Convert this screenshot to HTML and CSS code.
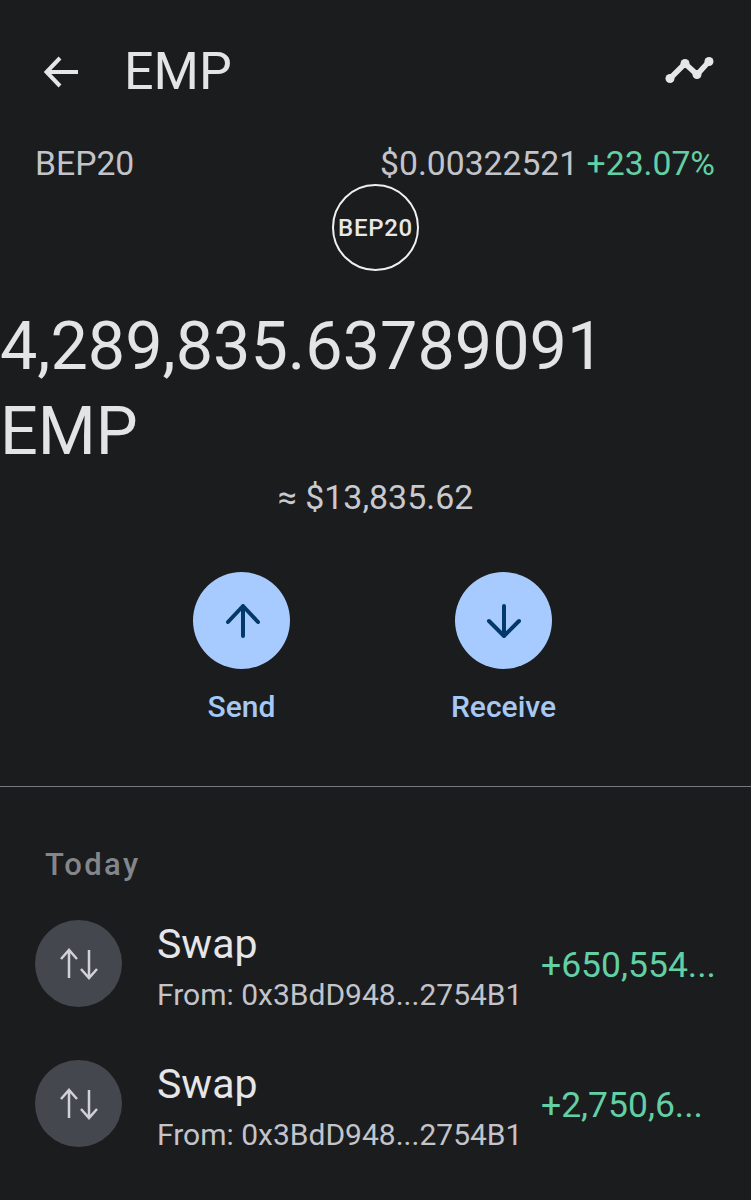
FILE: index.html
```html
<!DOCTYPE html>
<html lang="en">
<head>
  <meta charset="UTF-8">
  <title>EMP</title>
  <meta name="viewport" content="width=device-width, initial-scale=1.0">
  <link rel="stylesheet" href="styles.css">
</head>
<body>

<header class="topbar">
  <svg class="back" viewBox="0 0 36 32" width="36" height="32"><path d="M34 16H3M16 2L2.5 16L16 30"/></svg>
  <h1>EMP</h1>
  <svg class="chart" viewBox="0 0 50 30" width="50" height="30">
    <path d="M5 21.5L20 6.5L32 17.5L44 4.5"/>
    <circle cx="5" cy="21.5" r="4.5"/><circle cx="20" cy="6.5" r="4.5"/><circle cx="32" cy="17.5" r="4.5"/><circle cx="44" cy="4.5" r="4.5"/>
  </svg>
</header>

<div class="price-row">
  <span>BEP20</span>
  <span>$0.00322521 <span class="up">+23.07%</span></span>
</div>

<div class="badge">BEP20</div>

<div class="balance">4,289,835.63789091 EMP</div>
<div class="fiat">≈ $13,835.62</div>

<div class="actions">
  <div class="action">
    <div class="action-btn">
      <svg viewBox="0 0 36 36" width="36" height="36"><path d="M19 33V3M4 19L19 3L34 19"/></svg>
    </div>
    <span>Send</span>
  </div>
  <div class="action">
    <div class="action-btn">
      <svg viewBox="0 0 36 36" width="36" height="36"><path d="M18 3V33M3 18L18 33L33 18"/></svg>
    </div>
    <span>Receive</span>
  </div>
</div>

<section class="history">
  <h2>Today</h2>

  <div class="tx">
    <div class="tx-icon">
      <svg viewBox="0 0 40 32" width="40" height="32"><path d="M10 30V2M2 11L10 2L18 11M30 2V30M22 21L30 30L38 21"/></svg>
    </div>
    <div class="tx-info">
      <div class="tx-type">Swap</div>
      <div class="tx-from">From: 0x3BdD948...2754B1</div>
    </div>
    <div class="tx-amount">+650,554...</div>
  </div>

  <div class="tx">
    <div class="tx-icon">
      <svg viewBox="0 0 40 32" width="40" height="32"><path d="M10 30V2M2 11L10 2L18 11M30 2V30M22 21L30 30L38 21"/></svg>
    </div>
    <div class="tx-info">
      <div class="tx-type">Swap</div>
      <div class="tx-from">From: 0x3BdD948...2754B1</div>
    </div>
    <div class="tx-amount">+2,750,6...</div>
  </div>
</section>

</body>
</html>
```

FILE: styles.css
```css
* { box-sizing: border-box; margin: 0; padding: 0; }
html, body { height: 1200px; overflow: hidden; }
body {
  font-family: Roboto, sans-serif;
  background: #1b1c1e;
  color: #e4e4e6;
}
.topbar {
  display: flex;
  align-items: center;
  height: 143px;
  padding: 0 36px 0 44px;
}
.back { fill: none; stroke: #e6e6e8; stroke-width: 4; }
.topbar h1 {
  flex: 1;
  margin-left: 44px;
  font-size: 52px;
  font-weight: 400;
}
.chart { fill: #e6e6e8; }
.chart path { fill: none; stroke: #e6e6e8; stroke-width: 5.5; }
.price-row {
  display: flex;
  justify-content: space-between;
  padding: 0 36px 0 35px;
  height: 41px;
  font-size: 33.7px;
  line-height: 41px;
  color: #c3c4ca;
}
.up { color: #62d0a4; }
.badge {
  width: 87px;
  height: 87px;
  margin: 0 auto;
  padding-top: 1px;
  border: 2px solid #f0f0f0;
  border-radius: 50%;
  display: flex;
  align-items: center;
  justify-content: center;
  font-size: 24px;
  font-weight: 500;
  letter-spacing: 0.7px;
  color: #e8e8e8;
}
.balance {
  margin-top: 33px;
  font-size: 66.5px;
  line-height: 85px;
}
.fiat {
  text-align: center;
  font-size: 33.9px;
  line-height: 42px;
  color: #c9cacf;
  margin-top: 3px;
}
.actions {
  display: flex;
  justify-content: center;
  gap: 165px;
  margin: 53px 6px 0 0;
}
.action {
  display: flex;
  flex-direction: column;
  align-items: center;
  width: 97px;
  gap: 20px;
  color: #a6c8f5;
  font-size: 30px;
  font-weight: 500;
  line-height: 36px;
  white-space: nowrap;
}
.action-btn {
  width: 97px;
  height: 97px;
  border-radius: 50%;
  background: #a8cbff;
  display: flex;
  align-items: center;
  justify-content: center;
}
.action-btn svg { fill: none; stroke: #03386a; stroke-width: 4; stroke-linecap: round; stroke-linejoin: round; }
.history {
  margin-top: 61px;
  border-top: 1px solid #77787c;
  padding: 59px 36px 0 35px;
}
.history h2 {
  font-size: 31px;
  font-weight: 500;
  line-height: 38px;
  letter-spacing: 2.4px;
  color: #83868b;
  margin: 0 0 36px 10px;
}
.tx {
  display: flex;
  align-items: center;
  height: 87px;
}
.tx + .tx { margin-top: 53px; }
.tx-icon {
  flex: none;
  width: 87px;
  height: 87px;
  border-radius: 50%;
  background: #44474e;
  display: flex;
  align-items: center;
  justify-content: center;
}
.tx-icon svg { fill: none; stroke: #d0d2d8; stroke-width: 2.5; }
.tx-info { flex: 1; margin: 12px 0 0 35px; white-space: nowrap; }
.tx-type { font-size: 41px; line-height: 51px; color: #e6e6e8; }
.tx-from { font-size: 30px; line-height: 50px; color: #c3c4ca; }
.tx-amount {
  flex: none;
  width: 174px;
  margin-top: 3px;
  font-size: 35.5px;
  color: #62d0a4;
  white-space: nowrap;
}
```
